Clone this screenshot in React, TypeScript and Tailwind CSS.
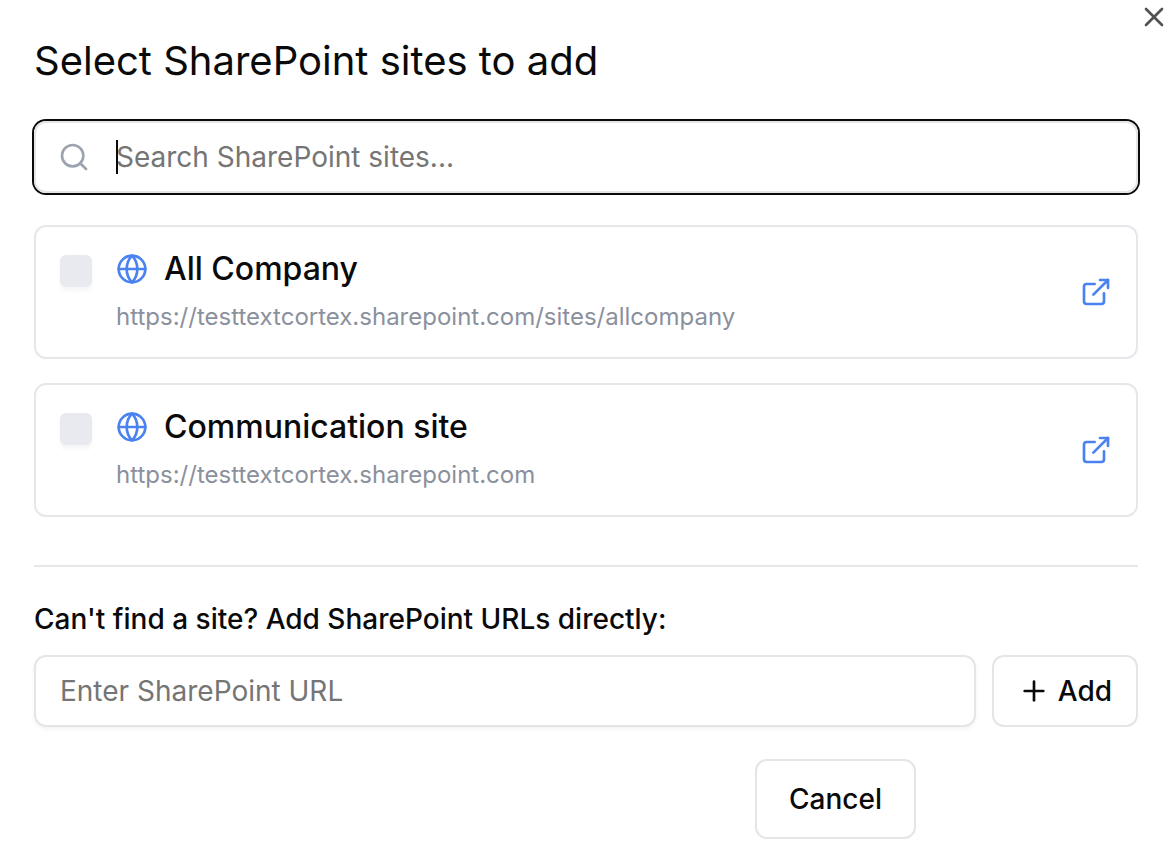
import { useState } from "react";
import { ExternalLink, Globe, Plus, Search, X } from "lucide-react";

type Site = { id: string; name: string; url: string };

const sites: Site[] = [
  { id: "all-company", name: "All Company", url: "https://testtextcortex.sharepoint.com/sites/allcompany" },
  { id: "communication", name: "Communication site", url: "https://testtextcortex.sharepoint.com" },
];

function SiteCard({ site }: { site: Site }) {
  return (
    <li className="flex items-center gap-6 rounded-xl border-2 border-[#e5e7eb] px-6 py-5">
      <input
        id={site.id}
        type="checkbox"
        className="mt-2 size-8 shrink-0 appearance-none self-start rounded-md bg-[#e9eaef] shadow-[0_4px_4px_rgba(0,0,0,0.04)] checked:bg-[#4f85f0]"
      />
      <div className="flex min-w-0 flex-1 flex-col gap-2 pb-[2px]">
        <label htmlFor={site.id} className="flex items-center gap-4 text-[32px] leading-[44px] font-medium">
          <Globe className="size-8 shrink-0 text-[#4b82f1]" strokeWidth={2} aria-hidden="true" />
          {site.name}
        </label>
        <p className="truncate text-2xl leading-9 text-[#8b909d]">{site.url}</p>
      </div>
      <a href={site.url} aria-label={`Open ${site.name}`} className="shrink-0 text-[#4b82f1]">
        <ExternalLink className="size-8" strokeWidth={2} aria-hidden="true" />
      </a>
    </li>
  );
}

export default function App() {
  const [query, setQuery] = useState("");
  const visible = sites.filter((s) => s.name.toLowerCase().includes(query.toLowerCase()));

  return (
    <main className="relative bg-white pt-9 pr-8 pb-5 pl-[34px] font-['Inter',sans-serif] text-[#0a0a0a]">
      <button type="button" aria-label="Close" className="absolute top-px right-0 text-[#525252]">
        <X className="size-8" strokeWidth={2} aria-hidden="true" />
      </button>
      <h1 className="text-[40px] leading-[50px]">Select SharePoint sites to add</h1>

      <div className="mt-[35px] flex h-[72px] items-center gap-[26px] rounded-xl border-2 border-[#e5e5e5] px-[22px] ring-2 ring-[#0a0a0a]">
        <Search className="size-8 shrink-0 text-[#9ca3af]" strokeWidth={2} aria-hidden="true" />
        <div className="relative flex flex-1 items-center">
          {query === "" && <span aria-hidden="true" className="absolute left-0 h-[34px] w-[2px] bg-[#0a0a0a]" />}
          <input
            type="text"
            aria-label="Search SharePoint sites"
            placeholder="Search SharePoint sites..."
            value={query}
            onChange={(e) => setQuery(e.target.value)}
            className="w-full bg-transparent text-[28px] leading-10 outline-none placeholder:text-[#757575]"
          />
        </div>
      </div>

      <ul className="mt-8 flex flex-col gap-6">
        {visible.map((site) => (
          <SiteCard key={site.id} site={site} />
        ))}
      </ul>

      <section className="mt-12 border-t-2 border-[#e5e7eb] pt-8">
        <label htmlFor="site-url" className="block text-[28px] leading-10 font-medium">
          Can't find a site? Add SharePoint URLs directly:
        </label>
        <div className="mt-4 flex gap-4">
          <input
            id="site-url"
            type="url"
            placeholder="Enter SharePoint URL"
            className="h-[72px] min-w-0 flex-1 rounded-xl border-2 border-[#e5e5e5] px-6 text-[28px] shadow-[0_2px_4px_rgba(0,0,0,0.05)] outline-none placeholder:text-[#757575]"
          />
          <button
            type="button"
            className="flex h-[72px] shrink-0 items-center gap-2 rounded-xl border-2 border-[#e5e5e5] px-6 text-[28px] font-medium"
          >
            <Plus className="size-8" strokeWidth={2} aria-hidden="true" />
            Add
          </button>
        </div>
      </section>

      <footer className="mt-8 flex justify-end pr-[222px]">
        <button type="button" className="h-20 rounded-xl border-2 border-[#e5e5e5] px-8 text-[28px] font-medium">
          Cancel
        </button>
      </footer>
    </main>
  );
}
